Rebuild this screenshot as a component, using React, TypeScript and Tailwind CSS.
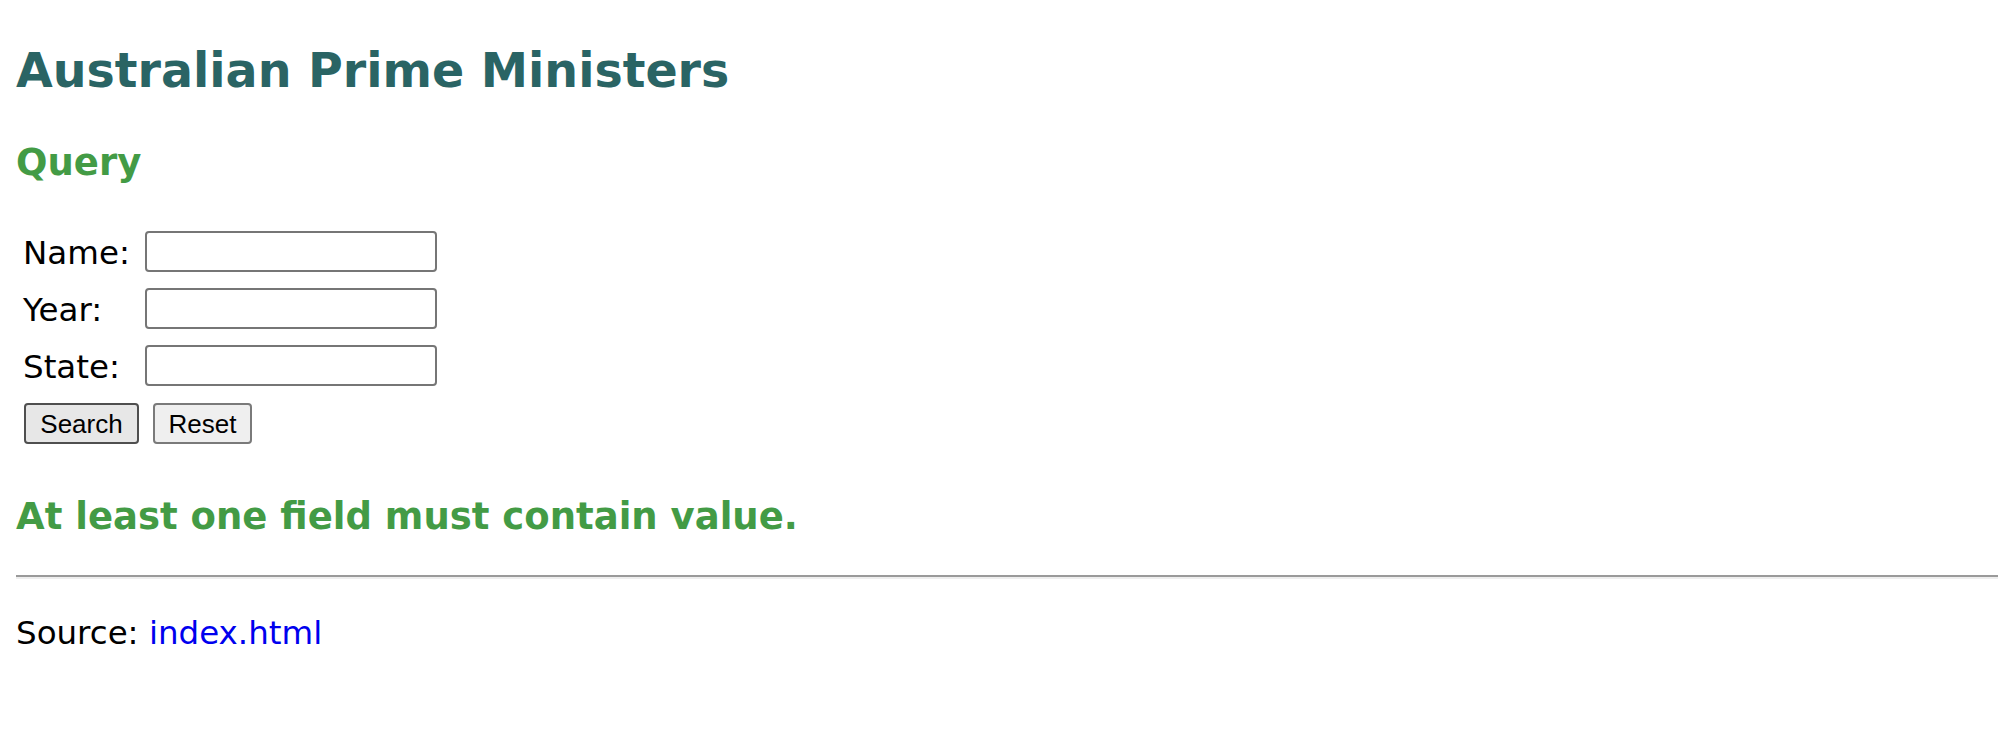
import React from 'react';

const fields = ['Name:', 'Year:', 'State:'];

export default function App() {
  return (
    <div className="min-h-[732px] bg-white pl-4 pr-[10px] text-black [font-family:'DejaVu_Sans',Verdana,sans-serif]">
      <h1 className="pt-[43px] text-[47.5px] font-bold leading-[56px] text-[#2a6464]">Australian Prime Ministers</h1>

      <h2 className="mt-[42px] text-[37px] font-bold leading-[43px] text-[#439b45]">Query</h2>

      <form className="ml-[7px] mt-[47px]" onSubmit={(e) => e.preventDefault()}>
        <div className="grid grid-cols-[114px_292px] gap-x-[8px] gap-y-[16px]">
          {fields.map((label) => (
            <React.Fragment key={label}>
              <div className="h-[41px] pt-[3px] text-[32.5px] leading-[38px]">{label}</div>
              <input
                type="text"
                className="h-[41px] w-[292px] rounded-[4px] border-2 border-[#767676] bg-white px-1 text-[26px] outline-none"
              />
            </React.Fragment>
          ))}
        </div>
        <div className="ml-[1px] mt-[17px] flex gap-[14px] [font-family:'Liberation_Sans',Arial,sans-serif]">
          <button
            type="submit"
            className="h-[41px] w-[115px] rounded-[4px] border-2 border-[#4f4f4f] bg-[#e7e7e7] text-[26px] leading-none text-black"
          >
            Search
          </button>
          <button
            type="reset"
            className="h-[41px] w-[99px] rounded-[4px] border-2 border-[#7a7a7a] bg-[#efefef] text-[26px] leading-none text-black"
          >
            Reset
          </button>
        </div>
      </form>

      <h2 className="mt-[51px] text-[37px] font-bold leading-[43px] text-[#439b45]">At least one field must contain value.</h2>

      <hr className="mt-[37px] border-t-2 border-b-2 border-t-[#9a9a9a] border-b-[#eeeeee]" />

      <p className="mt-[36px] text-[32.5px] leading-[37px]">
        Source: <a href="#" className="text-[#0000ee]">index.html</a>
      </p>
    </div>
  );
}
